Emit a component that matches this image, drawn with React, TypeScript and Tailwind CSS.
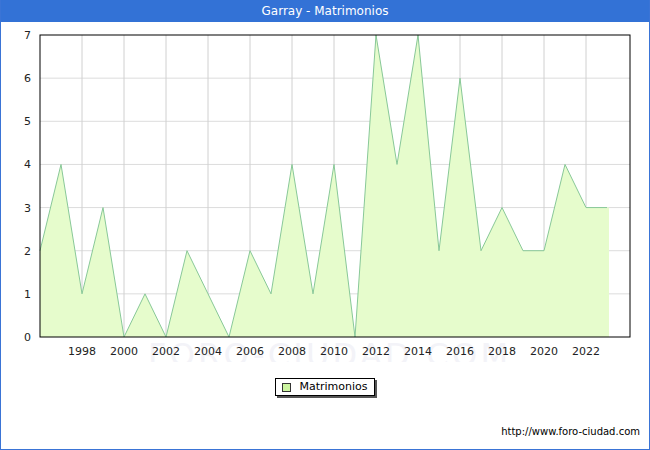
const data = [2, 4, 1, 3, 0, 1, 0, 2, 1, 0, 2, 1, 4, 1, 4, 0, 7, 4, 7, 2, 6, 2, 3, 2, 2, 4, 3, 3];

const X0 = 40;
const X1 = 630;
const Y0 = 35;
const Y1 = 337;
const step = 21;
const unit = (Y1 - Y0) / 7;

const px = (i: number) => X0 + i * step;
const py = (v: number) => Y1 - v * unit;

const Chart = () => {
  const line = data.map((v, i) => `${px(i)},${py(v)}`).join(" ");
  const area = `${px(0)},${Y1} ${line} ${px(data.length - 1) + 2},${py(3)} ${px(data.length - 1) + 2},${Y1}`;
  const years = [1998, 2000, 2002, 2004, 2006, 2008, 2010, 2012, 2014, 2016, 2018, 2020, 2022];
  return (
    <svg width="648" height="340" className="block" style={{ fontFamily: "'DejaVu Sans', sans-serif" }}>
      <g transform="translate(-1,-22)">
        {/* watermark, drawn first so everything sits on top */}
        <text x={328} y={366} fontSize="32" textAnchor="middle" fill="#f3f3f8" textLength="360">FORO-CIUDAD.COM</text>
        {[1, 2, 3, 4, 5, 6].map((v) => (
          <line key={v} x1={X0} x2={X1} y1={py(v)} y2={py(v)} stroke="#dcdcdc" />
        ))}
        {years.map((y) => (
          <line key={y} x1={px(y - 1996)} x2={px(y - 1996)} y1={Y0} y2={Y1} stroke="#d0d0d0" />
        ))}
        <polygon points={area} fill="#e6fccc" />
        <polyline points={line} fill="none" stroke="#88c898" strokeWidth="1" />
        <rect x={X0} y={Y0} width={X1 - X0} height={Y1 - Y0} fill="none" stroke="#000" />
        {[0, 1, 2, 3, 4, 5, 6, 7].map((v) => (
          <text key={v} x={31} y={py(v) + 4} fontSize="11" textAnchor="end" fill="#222">{v}</text>
        ))}
        {years.map((y) => (
          <text key={y} x={px(y - 1996)} y={355} fontSize="11" textAnchor="middle" fill="#222">{y}</text>
        ))}
      </g>
    </svg>
  );
};

export default function App() {
  return (
    <div className="w-[650px] h-[450px] border border-[#3a74d6] border-t-0 bg-white flex flex-col" style={{ fontFamily: "'DejaVu Sans', sans-serif" }}>
      <div className="h-[22px] bg-[#3372d6] text-white text-[12px] flex items-center justify-center shrink-0">
        Garray - Matrimonios
      </div>
      <Chart />
      <div className="flex justify-center mt-[16px]">
        <div className="flex items-center gap-[8px] border border-black bg-white px-[6px] h-[18px] text-[11px] shadow-[2px_2px_0_#555]">
          <span className="w-[9px] h-[9px] border border-[#333] bg-[#ccf5a0]" />
          Matrimonios
        </div>
      </div>
      <div className="flex-1" />
      <div className="text-[10px] text-black text-right pr-[9px] pb-[10px]">http://www.foro-ciudad.com</div>
    </div>
  );
}
